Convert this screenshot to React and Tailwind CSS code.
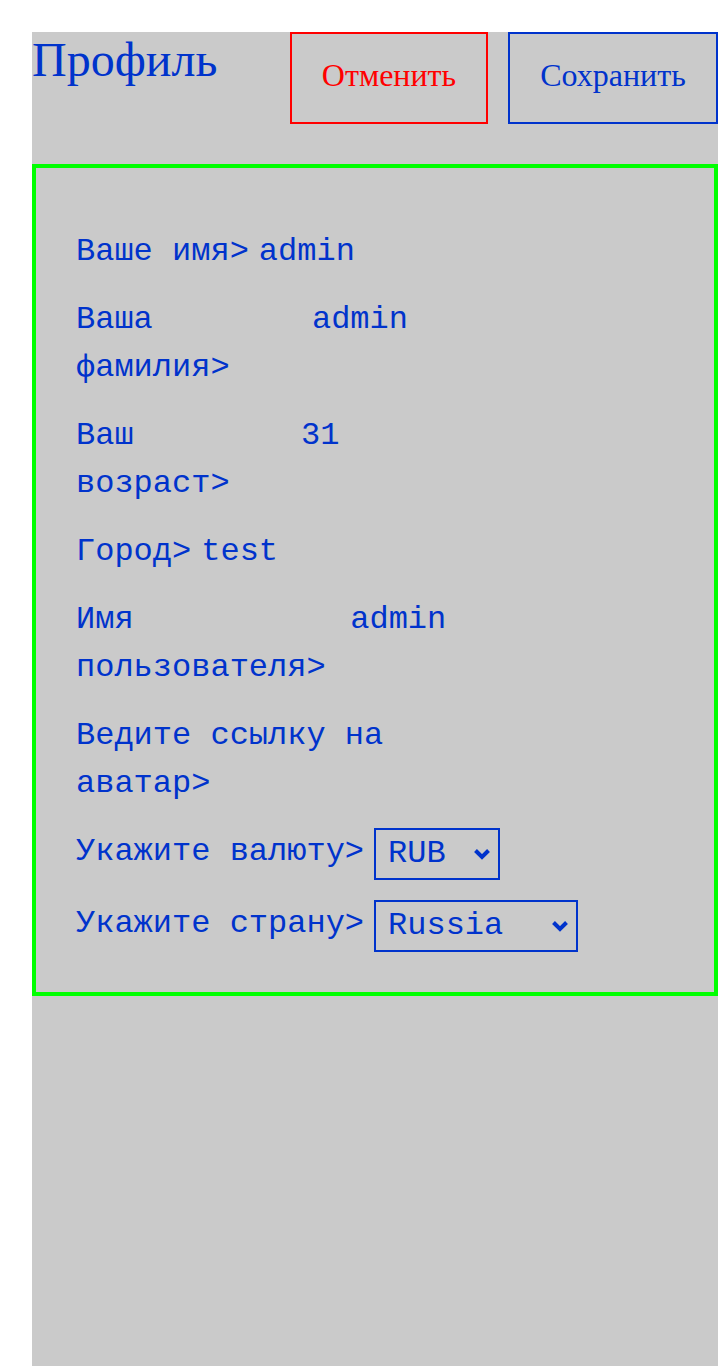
import React from 'react';

const fields = [
  { label: 'Ваше имя>', value: 'admin' },
  { label: 'Ваша фамилия>', value: 'admin' },
  { label: 'Ваш возраст>', value: '31' },
  { label: 'Город>', value: 'test' },
  { label: 'Имя пользователя>', value: 'admin' },
  { label: 'Ведите ссылку на аватар>', value: '' },
];

const Chevron = () => (
  <svg
    className="pointer-events-none absolute right-[9px] top-1/2 -translate-y-1/2"
    width="18"
    height="12"
    viewBox="0 0 18 12"
    fill="none"
  >
    <path d="M2.5 2.5 L9 9 L15.5 2.5" stroke="#0033cc" strokeWidth="4" />
  </svg>
);

const Profile = () => {
  return (
    <div className="min-h-screen bg-white pl-8 pt-8">
      <div className="min-h-[calc(100vh-32px)] bg-[#cacaca] text-[#0033cc]">
        {/* Header */}
        <header className="flex items-start justify-between">
          <h1 className="font-['Liberation_Serif',serif] text-[48px] leading-[normal]">Профиль</h1>
          <div className="flex gap-5">
            <button className="flex h-[92px] w-[198px] items-center justify-center border-2 border-[#ff0000] pb-1.5 font-['Liberation_Serif',serif] text-[32px] text-[#ff0000]">
              Отменить
            </button>
            <button className="flex h-[92px] w-[210px] items-center justify-center border-2 border-[#0033cc] pb-1.5 font-['Liberation_Serif',serif] text-[32px] text-[#0033cc]">
              Сохранить
            </button>
          </div>
        </header>

        {/* Form */}
        <form className="mt-10 border-4 border-[#00ff00] p-10 font-['Liberation_Mono',monospace] text-[32px] leading-[48px]">
          {fields.map((field, index) => (
            <div key={index} className="mt-5 flex items-start gap-[10px]">
              <label>{field.label}</label>
              <input
                type="text"
                defaultValue={field.value}
                className="h-[48px] w-[400px] min-w-0 border-0 bg-transparent p-0 text-[#0033cc] outline-none"
              />
            </div>
          ))}
          <div className="mt-5 flex items-start gap-[10px]">
            <label>Укажите валюту&gt;</label>
            <div className="relative">
              <select
                defaultValue="RUB"
                className="h-[52px] w-[126px] appearance-none border-2 border-[#0033cc] bg-transparent pl-3 text-[#0033cc] outline-none"
              >
                <option>RUB</option>
                <option>USD</option>
                <option>EUR</option>
              </select>
              <Chevron />
            </div>
          </div>
          <div className="mt-5 flex items-start gap-[10px]">
            <label>Укажите страну&gt;</label>
            <div className="relative">
              <select
                defaultValue="Russia"
                className="h-[52px] w-[204px] appearance-none border-2 border-[#0033cc] bg-transparent pl-3 text-[#0033cc] outline-none"
              >
                <option>Russia</option>
                <option>Belarus</option>
                <option>Ukraine</option>
              </select>
              <Chevron />
            </div>
          </div>
        </form>
      </div>
    </div>
  );
};

export default Profile;
